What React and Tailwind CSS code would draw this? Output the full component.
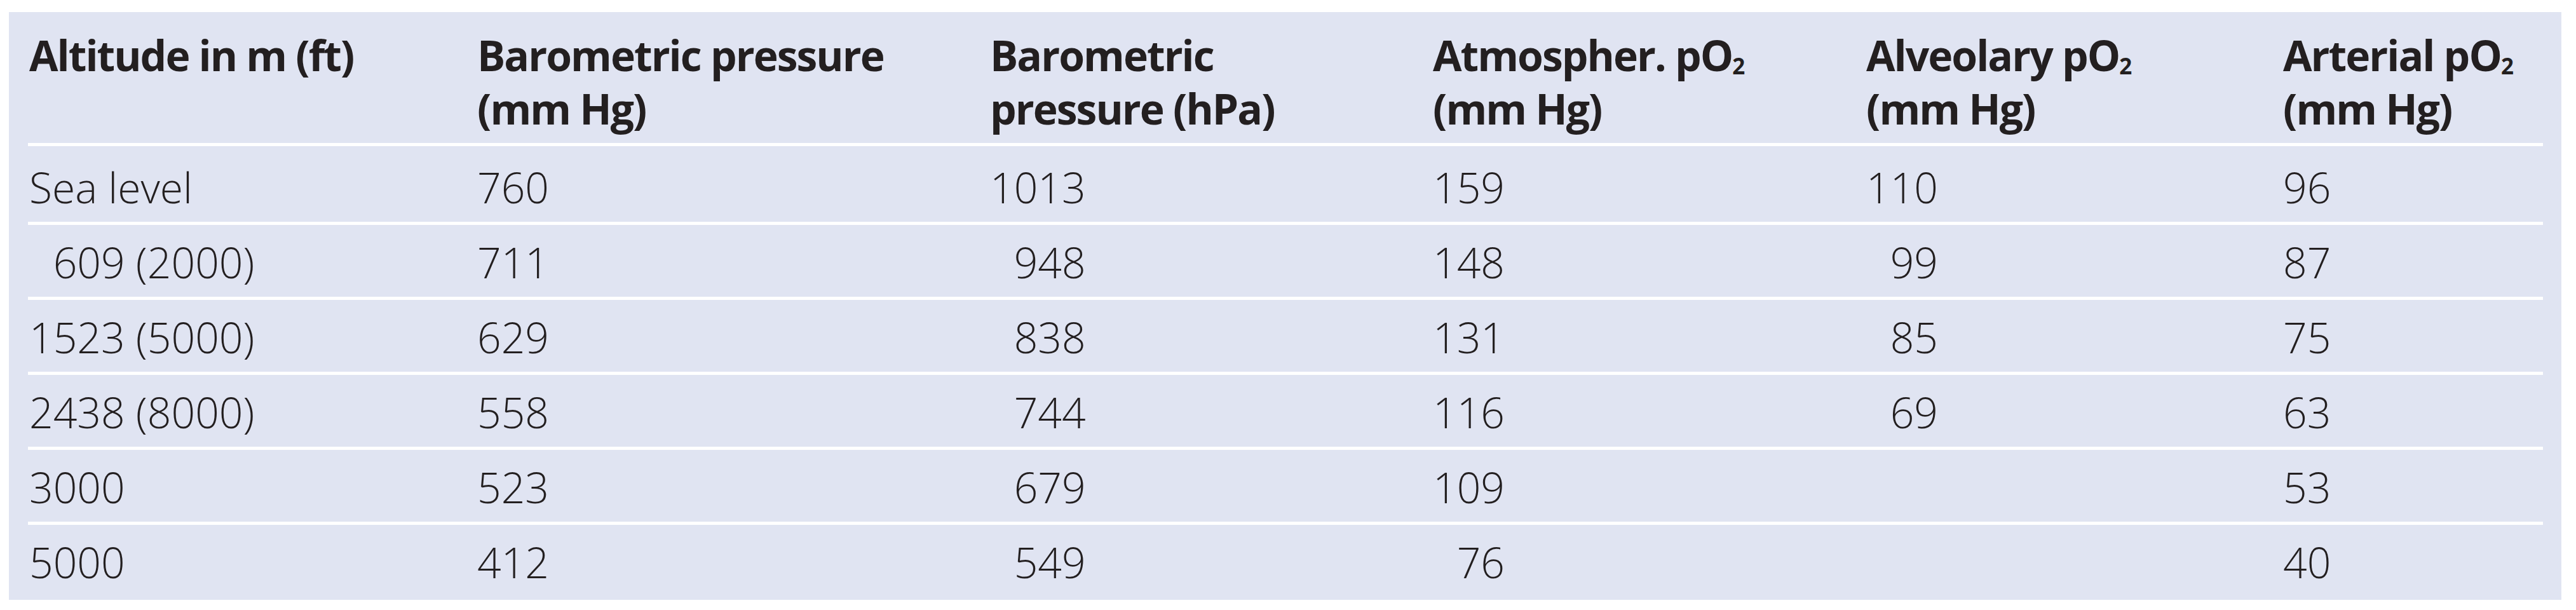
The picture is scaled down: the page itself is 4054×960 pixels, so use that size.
const COLS = "grid grid-cols-[705px_807px_697px_682px_656px_411px]";

const HEADERS = [
  ["Altitude in m (ft)"],
  ["Barometric pressure", "(mm Hg)"],
  ["Barometric", "pressure (hPa)"],
  [["Atmospher. pO", "2"], "(mm Hg)"],
  [["Alveolary pO", "2"], "(mm Hg)"],
  [["Arterial pO", "2"], "(mm Hg)"],
];

// a leading space means the number is pushed right by one digit
const ROWS = [
  ["Sea level", "760", "1013", "159", "110", "96"],
  [" 609 (2000)", "711", " 948", "148", " 99", "87"],
  ["1523 (5000)", "629", " 838", "131", " 85", "75"],
  ["2438 (8000)", "558", " 744", "116", " 69", "63"],
  ["3000", "523", " 679", "109", "", "53"],
  ["5000", "412", " 549", " 76", "", "40"],
];

const HeaderLine = ({ line }) => {
  if (Array.isArray(line)) {
    return (
      <div>
        {line[0]}
        <sub className="text-[35px] bottom-[-5px]">{line[1]}</sub>
      </div>
    );
  }
  return <div>{line}</div>;
};

const Value = ({ text }) => {
  if (text.startsWith(" ")) {
    return (
      <span>
        <span className="invisible">0</span>
        {text.slice(1)}
      </span>
    );
  }
  return <span>{text}</span>;
};

export default function App() {
  return (
    <div className="bg-white w-[4054px] h-[960px] pt-[19px] pl-[14px] font-['Open_Sans',sans-serif] text-[#231f20]">
      <div className="w-[4017px] bg-[#e0e4f2] pl-[30px] pr-[29px]">
        <div className={`${COLS} h-[211px] border-b-[5px] border-white pt-[25px] font-bold text-[66px] leading-[84px] tracking-[-0.03em] whitespace-nowrap`}>
          {HEADERS.map((lines, i) => (
            <div key={i} className="pl-[2px]">
              {lines.map((line, j) => (
                <HeaderLine key={j} line={line} />
              ))}
            </div>
          ))}
        </div>

        {ROWS.map((row, r) => {
          const last = r === ROWS.length - 1;
          return (
            <div
              key={r}
              className={`${COLS} font-light text-[66px] leading-[84px] whitespace-nowrap ${
                r === 0 ? "h-[124px] pt-[22px]" : "h-[118px] pt-[16px]"
              } ${last ? "" : "border-b-[5px] border-white"}`}
            >
              {row.map((cell, c) => (
                <div
                  key={c}
                  className={`pl-[2px] ${
                    last
                      ? c === 4
                        ? "h-[116px] border-b-[3px] border-transparent"
                        : "h-[116px] border-b-[3px] border-white"
                      : ""
                  }`}
                >
                  <Value text={cell} />
                </div>
              ))}
            </div>
          );
        })}
      </div>
    </div>
  );
}
